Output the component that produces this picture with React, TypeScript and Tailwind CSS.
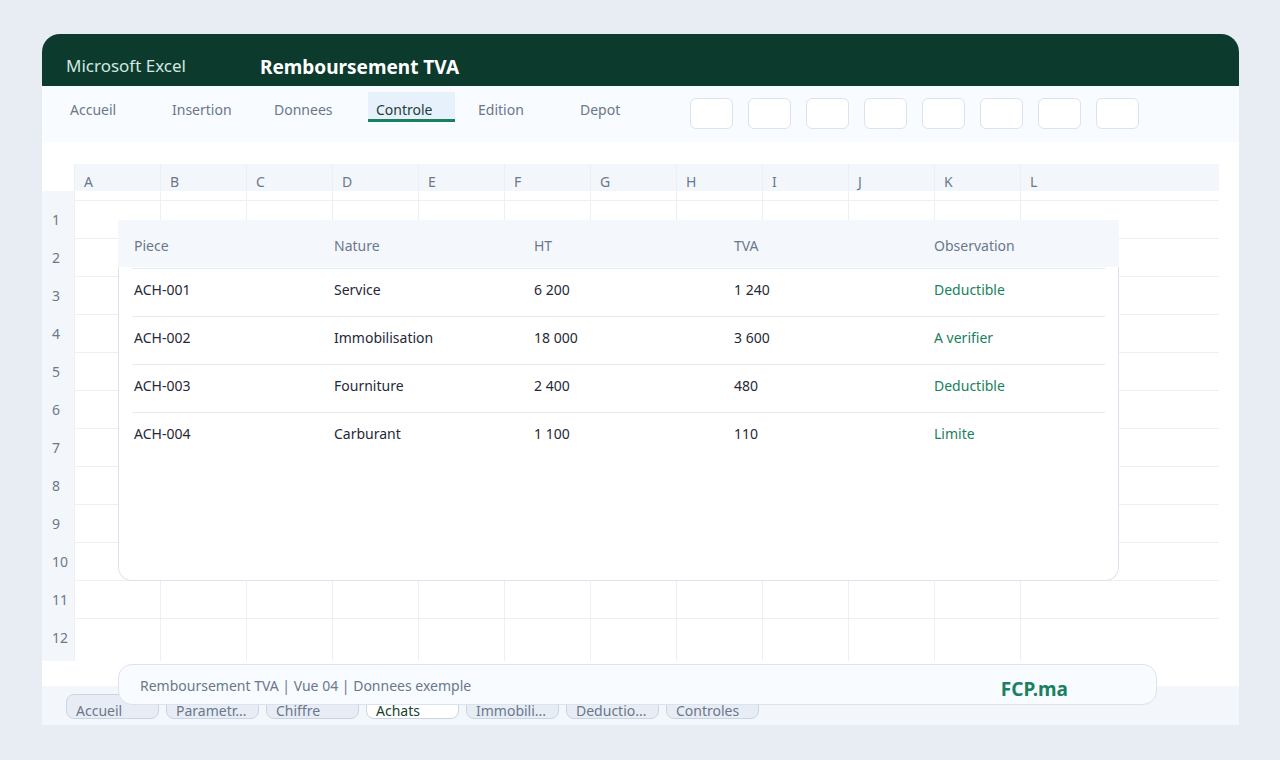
import React from "react";

const ribbonTabs = ["Accueil", "Insertion", "Donnees", "Controle", "Edition", "Depot"];
const tools = [1, 2, 3, 4, 5, 6, 7, 8];
const columns = ["A", "B", "C", "D", "E", "F", "G", "H", "I", "J", "K", "L"];
const rowNumbers = [1, 2, 3, 4, 5, 6, 7, 8, 9, 10, 11, 12];
const sheets = ["Accueil", "Parametr...", "Chiffre", "Achats", "Immobili...", "Deductio...", "Controles"];
const headings = ["Piece", "Nature", "HT", "TVA", "Observation"];
const purchases = [
  ["ACH-001", "Service", "6 200", "1 240", "Deductible"],
  ["ACH-002", "Immobilisation", "18 000", "3 600", "A verifier"],
  ["ACH-003", "Fourniture", "2 400", "480", "Deductible"],
  ["ACH-004", "Carburant", "1 100", "110", "Limite"],
];

function TitleBar() {
  return (
    <header className="flex h-[52px] items-center rounded-t-[18px] bg-[#0c3b2e] px-6 pt-3">
      <span className="w-[194px] text-[17px] leading-6 text-[#d1e7e0]">Microsoft Excel</span>
      <h1 className="pt-0.5 text-[19px] leading-6 font-bold text-white">Remboursement TVA</h1>
    </header>
  );
}

function Ribbon() {
  return (
    <div className="flex h-14 items-start bg-[#f8fbff] pt-1.5 pl-5">
      <nav className="flex gap-[15px]">
        {ribbonTabs.map((tab) => (
          <button
            key={tab}
            type="button"
            className={
              tab === "Controle"
                ? "h-[30px] w-[87px] border-b-3 border-[#1a8060] bg-[#e6f1fc] px-2 pt-2 text-left leading-[19px] text-[#1d3f38]"
                : "h-[30px] w-[87px] border-b-3 border-transparent px-2 pt-2 text-left leading-[19px] text-[#6b778b]"
            }
          >
            {tab}
          </button>
        ))}
      </nav>
      <div className="ml-[31px] flex gap-[15px] pt-1.5">
        {tools.map((tool) => (
          <button
            key={tool}
            type="button"
            aria-label={`Outil ${tool}`}
            className="h-[31px] w-[43px] rounded-md border border-[#dbe4ee] bg-white"
          />
        ))}
      </div>
    </div>
  );
}

function Grid() {
  return (
    <table className="w-full table-fixed border-separate border-spacing-0 text-left text-[#6b778b]">
      <thead>
        <tr className="h-[27px]">
          <td className="w-8 p-0" />
          {columns.map((column) => (
            <th
              key={column}
              scope="col"
              className="w-[86px] border-l border-[#ebf0f5] bg-[#f3f7fc] p-0 pt-2 pl-[9px] leading-[19px] font-normal last:w-auto"
            >
              {column}
            </th>
          ))}
        </tr>
      </thead>
      <tbody>
        <tr className="h-[9px]">
          <td className="bg-[#f3f7fc] p-0" />
          {columns.map((column) => (
            <td key={column} className="border-l border-[#ebf0f5] p-0" />
          ))}
        </tr>
        {rowNumbers.map((row) => (
          <tr key={row} className="h-[38px] last:h-[43px]">
            <th scope="row" className="bg-[#f3f7fc] p-0 pt-2 pl-2.5 align-top leading-6 font-normal">
              {row}
            </th>
            {columns.map((column) => (
              <td key={column} className="border-t border-l border-[#ebf0f5] p-0" />
            ))}
          </tr>
        ))}
      </tbody>
    </table>
  );
}

function PurchasesCard() {
  return (
    <div className="absolute top-[78px] right-[120px] left-[76px] h-[361px] rounded-b-[14px] border border-t-0 border-[#dbe4ee] bg-white px-[13px] before:absolute before:-inset-x-px before:top-0 before:h-[47px] before:bg-[#f4f8fd]">
      <table className="relative w-full table-fixed border-separate border-spacing-0 text-left">
        <thead>
          <tr className="h-12 text-[#6b778b]">
            {headings.map((heading) => (
              <th key={heading} scope="col" className="w-[200px] p-0 pt-1 pl-0.5 font-normal last:w-auto">
                {heading}
              </th>
            ))}
          </tr>
        </thead>
        <tbody>
          {purchases.map((purchase) => (
            <tr key={purchase[0]} className="h-12 text-[#1f2937]">
              {purchase.map((value, index) => (
                <td
                  key={headings[index]}
                  className="border-t border-[#e4ebf0] p-0 pb-1.5 pl-0.5 last:text-[#1a8060]"
                >
                  {value}
                </td>
              ))}
            </tr>
          ))}
        </tbody>
      </table>
    </div>
  );
}

function SheetTabs() {
  return (
    <nav className="flex h-[39px] gap-[7px] bg-[#f3f7fc] px-6 pt-2">
      {sheets.map((sheet) => (
        <button
          key={sheet}
          type="button"
          className={
            sheet === "Achats"
              ? "h-[25px] w-[93px] rounded-lg border border-[#c9d5e3] bg-white px-[9px] pt-2 text-left leading-4 text-[#173f2e]"
              : "h-[25px] w-[93px] rounded-lg border border-[#c9d5e3] bg-[#e8edf5] px-[9px] pt-2 text-left leading-4 text-[#6b778b]"
          }
        >
          {sheet}
        </button>
      ))}
    </nav>
  );
}

function StatusBar() {
  return (
    <footer className="absolute right-[82px] bottom-5 left-[76px] flex h-[41px] items-center justify-between rounded-[14px] border border-[#dbe4ee] bg-[#f8fbff] pr-[88px] pl-[21px]">
      <span className="pt-0.5 text-[#6b778b]">Remboursement TVA | Vue 04 | Donnees exemple</span>
      <strong className="pt-2 text-[19px] leading-6 font-bold text-[#1a8060]">FCP.ma</strong>
    </footer>
  );
}

export default function App() {
  return (
    <div className="min-h-screen bg-[#e8edf4] pt-[34px] pr-[41px] pb-[35px] pl-[42px] font-['Noto_Sans','Open_Sans',sans-serif] text-[14px] leading-5">
      <div className="relative">
        <TitleBar />
        <Ribbon />
        <main className="relative bg-white pt-[22px] pr-5 pb-[25px]">
          <Grid />
          <PurchasesCard />
        </main>
        <SheetTabs />
        <StatusBar />
      </div>
    </div>
  );
}
